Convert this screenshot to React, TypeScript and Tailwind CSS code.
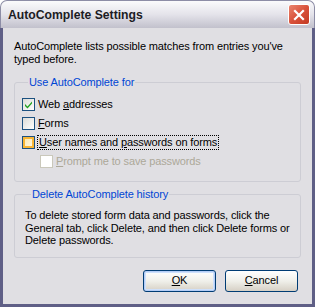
import React from "react";

function Box({ checked, hot, disabled }: { checked?: boolean; hot?: boolean; disabled?: boolean }) {
  if (disabled) {
    return <div className="w-[13px] h-[13px] border border-[#cac8bb] bg-white shrink-0" />;
  }
  return (
    <div className="w-[13px] h-[13px] border border-[#1c5180] bg-gradient-to-br from-[#dcdcd7] to-white shrink-0 flex items-center justify-center">
      {hot && <div className="w-[11px] h-[11px] border-2 border-[#f8b636] bg-gradient-to-br from-[#fde9b0] to-[#fff7e0]" />}
      {checked && (
        <svg width="9" height="9" viewBox="0 0 9 9">
          <path d="M1 4 L3.5 6.5 L8 1.5 L8 3.5 L3.5 8.5 L1 6 Z" fill="#21a121" />
        </svg>
      )}
    </div>
  );
}

export default function App() {
  const font = { fontFamily: '"Liberation Sans", Arial, sans-serif' };
  return (
    <div className="w-[315px] h-[307px] flex flex-col text-[11px] tracking-[-0.12px] text-black" style={font}>
      <div className="h-[28px] shrink-0 rounded-t-[7px] border border-b-0 border-[#8d8da6] bg-gradient-to-b from-[#fbfbfc] via-[#e4e3ea] to-[#c2c1cc] flex items-center pl-[7px] pr-[4px]">
        <div className="font-bold text-[12.2px] tracking-normal text-[#1c1c24] flex-1 pt-[1px]">AutoComplete Settings</div>
        <div className="w-[22px] h-[21px] rounded-[3px] border border-white bg-gradient-to-br from-[#e9846e] via-[#d9513a] to-[#c33a22] flex items-center justify-center">
          <svg width="12" height="12" viewBox="0 0 12 12">
            <path d="M2 2 L10 10 M10 2 L2 10" stroke="white" strokeWidth="2.2" strokeLinecap="square" />
          </svg>
        </div>
      </div>
      <div className="flex-1 border-[3px] border-t-0 border-[#5f5f86] bg-[#e0dfe3] flex flex-col pl-[11px] pr-[11px] pt-[12px]">
        <div className="leading-[13px]">
          AutoComplete lists possible matches from entries you've
          <br />
          typed before.
        </div>
        <fieldset className="mt-[10px] border border-[#cdcdd4] rounded-[3px] pl-[7px] pt-[5px] pb-[10px]">
          <legend className="ml-[6px] px-[1px] text-[#0046d5] leading-[13px]">Use AutoComplete for</legend>
          <div className="flex items-center gap-[3px] h-[20px]">
            <Box checked />
            <span>
              Web <u>a</u>ddresses
            </span>
          </div>
          <div className="flex items-center gap-[3px] h-[19px]">
            <Box />
            <span>
              <u>F</u>orms
            </span>
          </div>
          <div className="flex items-center gap-[2px] h-[19px]">
            <Box hot />
            <span className="border border-dotted border-black px-[1px] leading-[13px]">
              <u>U</u>ser names and <u>p</u>asswords on forms
            </span>
          </div>
          <div className="flex items-center gap-[3px] h-[19px] pl-[18px] text-[#aca899]">
            <Box disabled />
            <span>
              <u>P</u>rompt me to save passwords
            </span>
          </div>
        </fieldset>
        <fieldset className="mt-[6px] border border-[#cdcdd4] rounded-[3px] pl-[10px] pt-[8px] pb-[10px]">
          <legend className="ml-[6px] px-[1px] text-[#0046d5] leading-[13px]">Delete AutoComplete history</legend>
          <div className="leading-[12.5px]">
            To delete stored form data and passwords, click the
            <br />
            General tab, click Delete, and then click Delete forms or
            <br />
            Delete passwords.
          </div>
        </fieldset>
        <div className="flex justify-end gap-[9px] mt-[12px] pr-[3px]">
          <button className="w-[73px] h-[22px] rounded-[3px] border border-[#003c74] bg-gradient-to-b from-white via-[#f0f0ea] to-[#d6d0c5] shadow-[inset_0_0_0_1px_#b4cdf6,inset_0_0_0_2px_#cee0fb] leading-none">
            <u>O</u>K
          </button>
          <button className="w-[73px] h-[22px] rounded-[3px] border border-[#003c74] bg-gradient-to-b from-white via-[#f0f0ea] to-[#d6d0c5] leading-none">
            <u>C</u>ancel
          </button>
        </div>
      </div>
    </div>
  );
}
